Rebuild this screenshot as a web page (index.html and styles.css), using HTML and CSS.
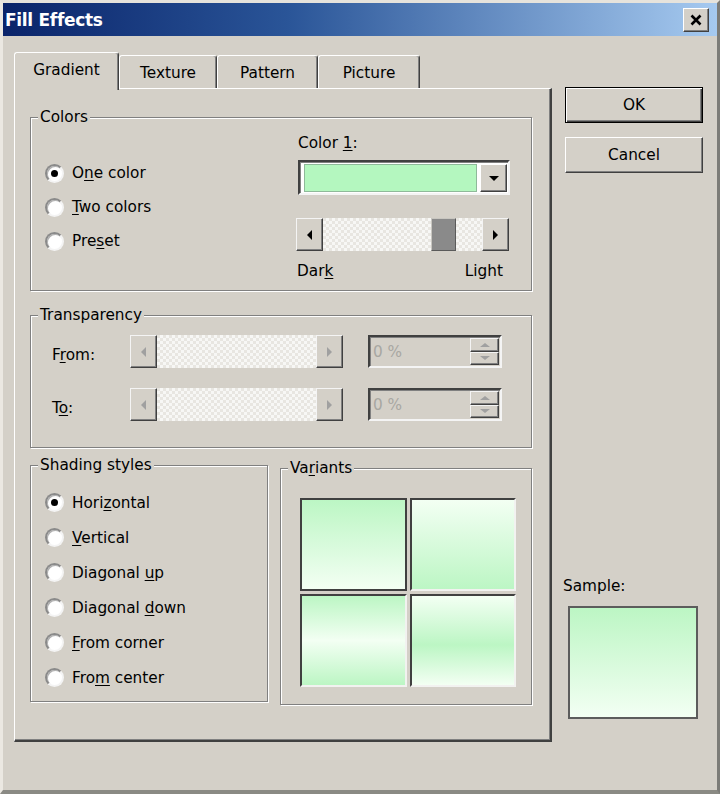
FILE: index.html
```html
<!DOCTYPE html>
<html>
<head>
<meta charset="utf-8">
<title>Fill Effects</title>
<link rel="stylesheet" href="styles.css">
</head>
<body>
<div class="window">
  <div class="titlebar">
    <span class="title">Fill Effects</span>
    <span class="close"><svg viewBox="0 0 14 12" width="14" height="12"><path d="M2.5 1.5 L11.5 10.5 M11.5 1.5 L2.5 10.5" stroke="#000" stroke-width="2.6" fill="none"/></svg></span>
  </div>
  <div class="client">
    <div class="main">
      <div class="tabs">
        <div class="tab sel t1">Gradient</div>
        <div class="tab t2">Texture</div>
        <div class="tab t3">Pattern</div>
        <div class="tab t4">Picture</div>
      </div>
      <div class="panel">
        <div class="group g-colors">
          <div class="gtitle">Colors</div>
          <div class="colors-body">
            <div class="radios r-colors">
              <div class="radio"><span class="rb on"></span><span>O<u>n</u>e color</span></div>
              <div class="radio"><span class="rb"></span><span><u>T</u>wo colors</span></div>
              <div class="radio"><span class="rb"></span><span>Pre<u>s</u>et</span></div>
            </div>
            <div class="color-ctrl">
              <div class="lbl">Color <u>1</u>:</div>
              <div class="combo">
                <div class="swatch"></div>
                <div class="drop"><span class="tri-d"></span></div>
              </div>
              <div class="hscroll hs-color">
                <div class="sbtn"><span class="tri-l"></span></div>
                <div class="track-l"></div>
                <div class="thumb"></div>
                <div class="track-r"></div>
                <div class="sbtn"><span class="tri-r"></span></div>
              </div>
              <div class="darklight"><span>Dar<u>k</u></span><span>Light</span></div>
            </div>
          </div>
        </div>

        <div class="group g-trans">
          <div class="gtitle">Transparency</div>
          <div class="tbody">
            <div class="trow tr1">
              <div class="tlabel">F<u>r</u>om:</div>
              <div class="hscroll dis">
                <div class="sbtn"><span class="tri-l"></span></div>
                <div class="track-full"></div>
                <div class="sbtn"><span class="tri-r"></span></div>
              </div>
              <div class="spin">
                <span class="val">0 %</span>
                <div class="spinbtns">
                  <div class="sp"><span class="tri-u"></span></div>
                  <div class="sp"><span class="tri-dn"></span></div>
                </div>
              </div>
            </div>
            <div class="trow tr2">
              <div class="tlabel">T<u>o</u>:</div>
              <div class="hscroll dis">
                <div class="sbtn"><span class="tri-l"></span></div>
                <div class="track-full"></div>
                <div class="sbtn"><span class="tri-r"></span></div>
              </div>
              <div class="spin">
                <span class="val">0 %</span>
                <div class="spinbtns">
                  <div class="sp"><span class="tri-u"></span></div>
                  <div class="sp"><span class="tri-dn"></span></div>
                </div>
              </div>
            </div>
          </div>
        </div>

        <div class="lower">
          <div class="group g-shading">
            <div class="gtitle">Shading styles</div>
            <div class="radios r-shading">
              <div class="radio"><span class="rb on"></span><span>Hori<u>z</u>ontal</span></div>
              <div class="radio"><span class="rb"></span><span><u>V</u>ertical</span></div>
              <div class="radio"><span class="rb"></span><span>Diagonal <u>u</u>p</span></div>
              <div class="radio"><span class="rb"></span><span>Diagonal <u>d</u>own</span></div>
              <div class="radio"><span class="rb"></span><span><u>F</u>rom corner</span></div>
              <div class="radio"><span class="rb"></span><span>Fro<u>m</u> center</span></div>
            </div>
          </div>
          <div class="group g-variants">
            <div class="gtitle">Va<u>r</u>iants</div>
            <div class="vgrid">
              <div class="cell v1 sel"></div>
              <div class="cell v2"></div>
              <div class="cell v3"></div>
              <div class="cell v4"></div>
            </div>
          </div>
        </div>
      </div>
    </div>
    <div class="side">
      <div class="btn default">OK</div>
      <div class="btn cancel">Cancel</div>
      <div class="sample-wrap">
        <div class="sample-lbl">Sample:</div>
        <div class="sample"></div>
      </div>
    </div>
  </div>
</div>
</body>
</html>
```
FILE: styles.css
```css
* { box-sizing: border-box; }

body {
  margin: 0;
  background: #d4d0c8;
  font-family: "DejaVu Sans", "Liberation Sans", sans-serif;
  font-size: 15.3px;
  color: #000;
}

u { text-decoration: underline; text-underline-offset: 2px; }

.window {
  width: 720px;
  height: 794px;
  background: #d4d0c8;
  border-style: solid;
  border-width: 3px 3px 4px 3px;
  border-color: #e6e3dc #7c7c78 #8a8a84 #ebe8e2;
  display: flex;
  flex-direction: column;
}

/* title bar */
.titlebar {
  height: 33px;
  flex: none;
  background: linear-gradient(to right, #0a246a 0%, #2a5598 40%, #a6caf0 100%);
  display: flex;
  align-items: center;
  justify-content: space-between;
  padding: 0 8px 0 2px;
}
.title {
  color: #fff;
  font-weight: bold;
  font-size: 17px;
  letter-spacing: -0.3px;
}
.close {
  width: 26px;
  height: 24px;
  background: #d4d0c8;
  border: 1px solid;
  border-color: #fff #404040 #404040 #fff;
  box-shadow: inset -1px -1px #808080;
  display: flex;
  align-items: center;
  justify-content: center;
}

/* client */
.client {
  flex: 1;
  display: flex;
  align-items: flex-start;
  padding: 16px 0 0 11px;
}
.main {
  width: 538px;
  display: flex;
  flex-direction: column;
}

/* tabs */
.tabs {
  height: 36px;
  display: flex;
  align-items: flex-end;
  position: relative;
  z-index: 1;
}
.tab {
  height: 33px;
  background: #d4d0c8;
  border: 1px solid;
  border-color: #fff #404040 transparent #fff;
  border-bottom: none;
  box-shadow: inset -1px 0 #808080;
  border-radius: 3px 3px 0 0;
  display: flex;
  align-items: center;
  justify-content: center;
  padding-top: 1px;
}
.tab.sel {
  height: 38px;
  margin-bottom: -2px;
  padding-bottom: 4px;
}
.t1 { width: 105px; }
.t2 { width: 98px; }
.t3 { width: 101px; }
.t4 { width: 102px; }

/* panel */
.panel {
  height: 654px;
  border-style: solid;
  border-width: 1px 2px 2px 1px;
  border-color: #fff #404040 #404040 #fff;
  box-shadow: inset -1px -1px #808080;
  padding: 28px 0 0 15px;
}

/* group boxes */
.group {
  border: 1px solid #808080;
  box-shadow: inset 1px 1px #fff, 1px 1px #fff;
}
.gtitle {
  width: fit-content;
  margin: -9px 0 0 7px;
  padding: 0 2px;
  background: #d4d0c8;
  line-height: 17px;
}

.g-colors { width: 502px; height: 174px; }
.colors-body {
  display: flex;
  justify-content: space-between;
  padding: 0 21px 0 14px;
}
.r-colors { margin-top: 30px; }
.radio {
  height: 34px;
  display: flex;
  align-items: center;
  white-space: nowrap;
}
.rb {
  width: 19px;
  height: 19px;
  border-radius: 50%;
  background: #fff;
  border: 2px solid;
  border-color: #8a8a8a #f4f4f4 #f4f4f4 #8a8a8a;
  box-shadow: inset 1px 1px #b0b0b0;
  margin-right: 8px;
  display: flex;
  align-items: center;
  justify-content: center;
  flex: none;
}
.rb.on::after {
  content: "";
  width: 7px;
  height: 7px;
  border-radius: 50%;
  background: #000;
}

.color-ctrl { width: 212px; margin-top: 8px; }
.lbl { line-height: 18px; }
.combo {
  margin-top: 8px;
  height: 35px;
  border: 2px solid;
  border-color: #404040 #f4f4f4 #f4f4f4 #404040;
  box-shadow: inset 1px 1px #808080;
  background: #fff;
  display: flex;
  padding: 2px 1px 1px 4px;
}
.swatch {
  flex: 1;
  background: #b4f7bf;
  border: 1px solid #8fb99a;
}
.drop {
  width: 27px;
  margin-left: 3px;
  background: #d4d0c8;
  border: 1px solid;
  border-color: #fff #404040 #404040 #fff;
  box-shadow: inset -1px -1px #808080;
  display: flex;
  align-items: center;
  justify-content: center;
}

.hscroll {
  display: flex;
  height: 34px;
}
.hs-color { margin-top: 23px; width: 213px; margin-left: -2px; height: 33px; }
.sbtn {
  width: 27px;
  flex: none;
  background: #d4d0c8;
  border: 1px solid;
  border-color: #f4f4f4 #404040 #404040 #f4f4f4;
  box-shadow: inset -1px -1px #808080;
  display: flex;
  align-items: center;
  justify-content: center;
}
.track-l, .track-r, .track-full {
  background-color: #efeeea;
  background-image: repeating-conic-gradient(#f7f7f5 0 25%, #e8e6e1 0 50%);
  background-size: 6px 6px;
}
.track-l { width: 108px; }
.track-r { flex: 1; }
.track-full { flex: 1; }
.thumb {
  width: 25px;
  background: #8a8a8a;
  border: 1px solid;
  border-color: #c8c6c0 #5a5a5a #5a5a5a #c8c6c0;
}

.tri-l, .tri-r, .tri-d, .tri-u, .tri-dn { width: 0; height: 0; display: block; }
.tri-l { border-top: 5px solid transparent; border-bottom: 5px solid transparent; border-right: 5px solid #000; }
.tri-r { border-top: 5px solid transparent; border-bottom: 5px solid transparent; border-left: 5px solid #000; }
.tri-d { border-left: 5px solid transparent; border-right: 5px solid transparent; border-top: 5px solid #000; }
.tri-u { border-left: 5px solid transparent; border-right: 5px solid transparent; border-bottom: 4px solid #a0a0a0; }
.tri-dn { border-left: 5px solid transparent; border-right: 5px solid transparent; border-top: 4px solid #a0a0a0; }
.dis .tri-l { border-right-color: #a0a0a0; }
.dis .tri-r { border-left-color: #a0a0a0; }

.darklight {
  margin-top: 11px;
  line-height: 18px;
  display: flex;
  justify-content: space-between;
  padding-right: 7px;
  margin-left: -1px;
}

/* transparency */
.g-trans { width: 502px; height: 133px; margin-top: 24px; }
.tbody { padding-left: 21px; }
.trow {
  display: flex;
  align-items: center;
  height: 33px;
}
.tr1 { margin-top: 11px; }
.tr2 { margin-top: 20px; }
.tlabel { width: 78px; padding-top: 6px; }
.trow .hscroll { width: 213px; height: 33px; }
.spin {
  margin-left: 25px;
  width: 134px;
  height: 33px;
  border: 2px solid;
  border-color: #404040 #f4f4f4 #f4f4f4 #404040;
  box-shadow: inset 1px 1px #808080;
  background: #d4d0c8;
  display: flex;
  align-items: center;
  justify-content: space-between;
  padding: 1px 1px 1px 3px;
}
.val { color: #a8a7a2; }
.spinbtns {
  width: 29px;
  height: 100%;
  display: flex;
  flex-direction: column;
}
.sp {
  flex: 1;
  background: #d4d0c8;
  border: 1px solid;
  border-color: #f4f4f4 #404040 #404040 #f4f4f4;
  box-shadow: inset -1px -1px #808080;
  display: flex;
  align-items: center;
  justify-content: center;
}

/* shading + variants */
.lower {
  margin-top: 17px;
  display: flex;
  align-items: flex-start;
  gap: 12px;
}
.g-shading { width: 238px; height: 237px; }
.r-shading { margin-top: 11px; padding-left: 14px; }
.r-shading .radio { height: 35px; }
.g-variants { width: 252px; height: 237px; margin-top: 3px; }
.vgrid {
  margin: 21px 0 0 19px;
  display: grid;
  grid-template-columns: 107px 106px;
  grid-template-rows: 93px 93px;
  gap: 3px;
}
.cell {
  border: 2px solid;
  border-color: #404040 #f2f2f0 #f2f2f0 #404040;
}
.cell.sel { border-color: #404040; }
.v1 { background: linear-gradient(to bottom, #bcf6c4, #f3fff3); }
.v2 { background: linear-gradient(to bottom, #f3fff3, #bcf6c4); }
.v3 { background: linear-gradient(to bottom, #bcf6c4, #f3fff3 50%, #bcf6c4); }
.v4 { background: linear-gradient(to bottom, #f3fff3, #bcf6c4 55%, #f3fff3); }

/* right side */
.side {
  width: 138px;
  height: 690px;
  margin-left: 13px;
  display: flex;
  flex-direction: column;
  padding: 35px 0 23px 0;
}
.btn {
  height: 36px;
  display: flex;
  align-items: center;
  justify-content: center;
  background: #d4d0c8;
}
.btn.default {
  border: 1px solid #000;
  box-shadow: inset 1px 1px #fff, inset -1px -1px #404040, inset -2px -2px #808080;
}
.btn.cancel {
  margin-top: 14px;
  border: 1px solid;
  border-color: #fff #404040 #404040 #fff;
  box-shadow: inset -1px -1px #808080;
}
.sample-wrap { margin-top: auto; }
.sample-lbl { line-height: 18px; margin-left: -2px; }
.sample {
  margin: 11px 0 0 3px;
  width: 130px;
  height: 113px;
  border: 2px solid #5c5c5c;
  background: linear-gradient(to bottom, #bcf6c4, #f3fff3);
}
```
